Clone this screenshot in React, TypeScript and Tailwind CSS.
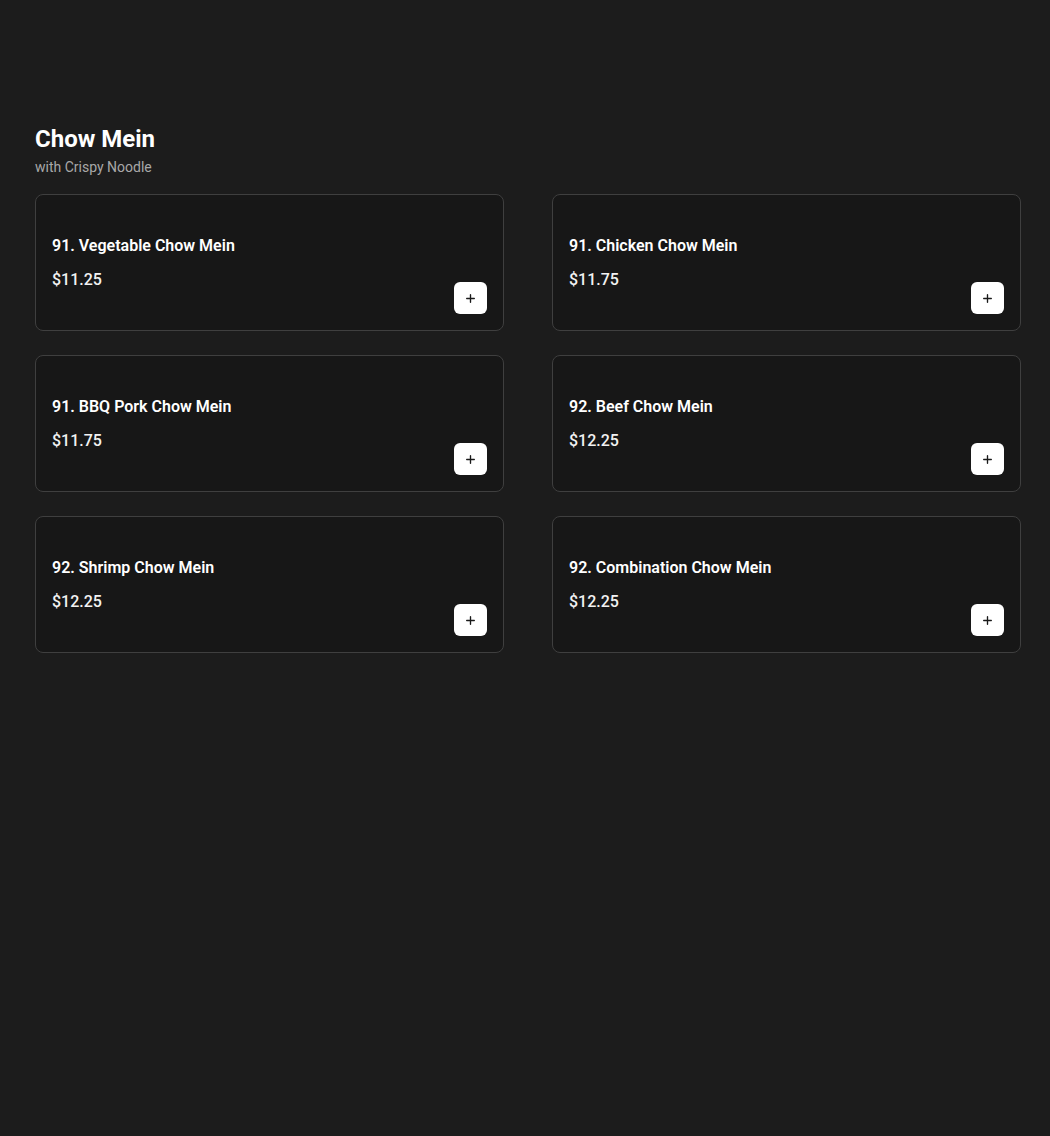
import { Plus } from 'lucide-react'

type Item = { name: string; price: string }

const items: Item[] = [
  { name: '91. Vegetable Chow Mein', price: '$11.25' },
  { name: '91. Chicken Chow Mein', price: '$11.75' },
  { name: '91. BBQ Pork Chow Mein', price: '$11.75' },
  { name: '92. Beef Chow Mein', price: '$12.25' },
  { name: '92. Shrimp Chow Mein', price: '$12.25' },
  { name: '92. Combination Chow Mein', price: '$12.25' },
]

function ItemCard({ item }: { item: Item }) {
  return (
    <div className="relative flex h-[137px] items-center rounded-lg border border-[#3f3f3f] bg-[#171717] px-4">
      <div className="flex flex-col gap-[10px]">
        <div className="text-[16px] leading-6 font-semibold text-white">{item.name}</div>
        <div className="text-[16px] leading-6 font-medium text-[#f2f2f2]">{item.price}</div>
      </div>
      {/* add to cart */}
      <button className="absolute right-4 bottom-4 flex h-[32px] w-[33px] items-center justify-center rounded-md bg-white text-[#1a1a1a]">
        <Plus size={13} strokeWidth={2.5} />
      </button>
    </div>
  )
}

export default function App() {
  return (
    <div
      className="min-h-[1136px] bg-[#1c1c1c] pt-[123px] pl-[35px] pr-[29px]"
      style={{ fontFamily: 'Roboto, "Noto Sans", sans-serif' }}
    >
      <h1 className="text-[24px] leading-8 font-bold text-white">Chow Mein</h1>
      <p className="mt-[2px] text-[14px] leading-5 text-[#a8a8a8]">with Crispy Noodle</p>
      <div className="mt-[17px] grid grid-cols-2 gap-x-[48px] gap-y-[24px]">
        {items.map((item) => (
          <ItemCard key={item.name} item={item} />
        ))}
      </div>
    </div>
  )
}
